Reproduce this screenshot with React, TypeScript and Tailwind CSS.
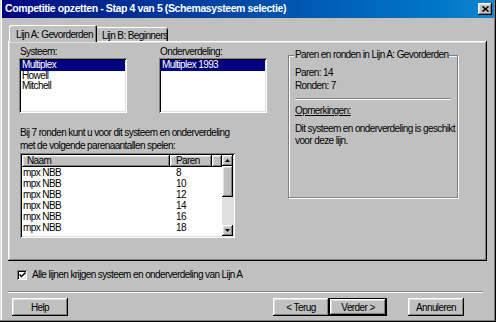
import React from "react";

const raised =
  "bg-[#c0c0c0] shadow-[inset_-1px_-1px_#000,inset_1px_1px_#fff,inset_-2px_-2px_#808080,inset_2px_2px_#dfdfdf]";
const sunken =
  "bg-white shadow-[inset_1px_1px_#808080,inset_-1px_-1px_#fff,inset_2px_2px_#000,inset_-2px_-2px_#dfdfdf]";

const rows = [8, 10, 12, 14, 16, 18];

function ListBox({ items, selected }: { items: string[]; selected: number }) {
  return (
    <div className={`${sunken} h-[55px] w-[108px] p-[2px]`}>
      {items.map((it, i) => (
        <div
          key={it}
          className={`h-[10.5px] leading-[10.5px] pl-[1px] whitespace-nowrap ${
            i === selected ? "bg-[#000080] text-white" : ""
          }`}
        >
          {it}
        </div>
      ))}
    </div>
  );
}

function Arrow({ up }: { up?: boolean }) {
  return (
    <div className={`${raised} h-[11px] flex items-center justify-center`}>
      <svg width="5" height="3" viewBox="0 0 5 3">
        {up ? <path d="M2.5 0 L5 3 L0 3 Z" fill="#000" /> : <path d="M0 0 L5 0 L2.5 3 Z" fill="#000" />}
      </svg>
    </div>
  );
}

function Button({ label, isDefault }: { label: string; isDefault?: boolean }) {
  if (isDefault) {
    return (
      <div className="w-[58px] h-[18px] border border-black">
        <div className={`${raised} w-full h-full flex items-center justify-center`}>{label}</div>
      </div>
    );
  }
  return <div className={`${raised} w-[56px] h-[18px] flex items-center justify-center`}>{label}</div>;
}

export default function App() {
  return (
    <div className="w-[496px] h-[322px] bg-[#c0c0c0] flex flex-col text-black text-[10px] tracking-[-0.6px] font-['Liberation_Sans',Arial,sans-serif] shadow-[inset_-1px_-1px_#000,inset_-2px_-2px_#808080,inset_1px_0_#dfdfdf,inset_2px_0_#fff]">
      {/* title bar */}
      <div className="mx-[2px] h-[18px] flex items-center pl-[3px] pr-[2px] bg-linear-to-r from-[#000080] to-[#1084d0]">
        <span className="text-white font-bold text-[10.5px] tracking-[-0.4px] whitespace-nowrap">
          Competitie opzetten - Stap 4 van 5 (Schemasysteem selectie)
        </span>
        <div className={`${raised} ml-auto w-[14px] h-[12px] flex items-center justify-center`}>
          <svg width="7" height="6" viewBox="0 0 7 6">
            <path d="M0.5 0.5 L6.5 5.5 M6.5 0.5 L0.5 5.5" stroke="#000" strokeWidth="1.6" />
          </svg>
        </div>
      </div>

      <div className="flex flex-col px-[8px]">
        {/* tabs */}
        <div className="flex items-end h-[16px] mt-[7px] ml-[1px]">
          <div className="relative z-10 -mb-[1px] h-[17px] w-[88px] bg-[#c0c0c0] rounded-tl-[2px] rounded-tr-[2px] shadow-[inset_1px_1px_#fff,inset_-1px_0_#000,inset_-2px_0_#808080] pl-[7px] pt-[2px] whitespace-nowrap">
            Lijn A: Gevorderden
          </div>
          <div className="h-[14px] w-[71px] bg-[#c0c0c0] rounded-tr-[2px] shadow-[inset_0_1px_#fff,inset_-1px_0_#000,inset_-2px_0_#808080] pl-[5px] pt-[1px] whitespace-nowrap">
            Lijn B: Beginners
          </div>
        </div>

        {/* tab panel */}
        <div className={`${raised} h-[220px] w-[479px] flex pl-[11px] pt-[5px]`}>
          <div className="w-[248px] flex flex-col">
            <div className="flex gap-[32px]">
              <div className="flex flex-col">
                <div className="h-[12px] leading-[12px] pl-[1px]">Systeem:</div>
                <ListBox items={["Multiplex", "Howell", "Mitchell"]} selected={0} />
              </div>
              <div className="flex flex-col">
                <div className="h-[12px] leading-[12px] pl-[1px]">Onderverdeling:</div>
                <ListBox items={["Multiplex 1993"]} selected={0} />
              </div>
            </div>

            <div className="mt-[13px] leading-[13px] pl-[1px] whitespace-nowrap">
              Bij 7 ronden kunt u voor dit systeem en onderverdeling
              <br />
              met de volgende parenaantallen spelen:
            </div>

            <div className={`${sunken} mt-[1px] ml-[1px] w-[215px] h-[85px] p-[2px] flex`}>
              <div className="w-[200px] flex flex-col">
                <div className="flex h-[12px] leading-[12px]">
                  <div className={`${raised} w-[148px] pl-[5px]`}>Naam</div>
                  <div className={`${raised} w-[42px] pl-[6px]`}>Paren</div>
                  <div className={`${raised} w-[10px]`} />
                </div>
                {rows.map((n) => (
                  <div key={n} className="flex h-[11.1px] leading-[11.1px]">
                    <div className="w-[148px] pl-[1px]">mpx NBB</div>
                    <div className="pl-[6px]">{n}</div>
                  </div>
                ))}
              </div>
              <div className="w-[11px] flex flex-col">
                <Arrow up />
                <div className={`${raised} h-[31px]`} />
                <div className="h-[28px] bg-[#e0e0e0]" />
                <Arrow />
              </div>
            </div>
          </div>

          {/* group box */}
          <div className="ml-[21px] mt-[9px] relative w-[170px] h-[143px] border border-[#808080] shadow-[1px_1px_#fff,inset_1px_1px_#fff] pl-[6px] pr-[6px] pt-[10px] flex flex-col">
            <span className="absolute -top-[7px] left-[5px] px-[1px] bg-[#c0c0c0] leading-[12px] whitespace-nowrap">
              Paren en ronden in Lijn A: Gevorderden
            </span>
            <div className="leading-[13px]">Paren: 14</div>
            <div className="leading-[13px]">Ronden: 7</div>
            <div className="mt-[6px] h-[2px] border-t border-[#808080] border-b border-b-white" />
            <div className="mt-[4px] leading-[13px] underline">Opmerkingen:</div>
            <div className="mt-[6px] leading-[12px] whitespace-nowrap">
              Dit systeem en onderverdeling is geschikt
              <br />
              voor deze lijn.
            </div>
          </div>
        </div>

        {/* checkbox */}
        <div className="mt-[7px] ml-[9px] h-[13px] flex items-center gap-[5px]">
          <div className={`${sunken} w-[10px] h-[10px] flex items-center justify-center`}>
            <svg width="7" height="6" viewBox="0 0 7 6">
              <path d="M0.5 2.5 L2.5 4.5 L6.5 0.5" stroke="#000" strokeWidth="1.5" fill="none" />
            </svg>
          </div>
          <span className="whitespace-nowrap">Alle lijnen krijgen systeem en onderverdeling van Lijn A</span>
        </div>

        {/* separator */}
        <div className="mt-[10px] w-[475px] h-[2px] border-t border-[#808080] border-b border-b-white" />

        {/* buttons */}
        <div className="mt-[5px] flex items-center">
          <div className="ml-[4px]">
            <Button label="Help" />
          </div>
          <div className="ml-auto mr-[24px] flex items-center">
            <Button label="< Terug" />
            <Button label="Verder >" isDefault />
            <div className="ml-[21px]">
              <Button label="Annuleren" />
            </div>
          </div>
        </div>
      </div>
    </div>
  );
}
